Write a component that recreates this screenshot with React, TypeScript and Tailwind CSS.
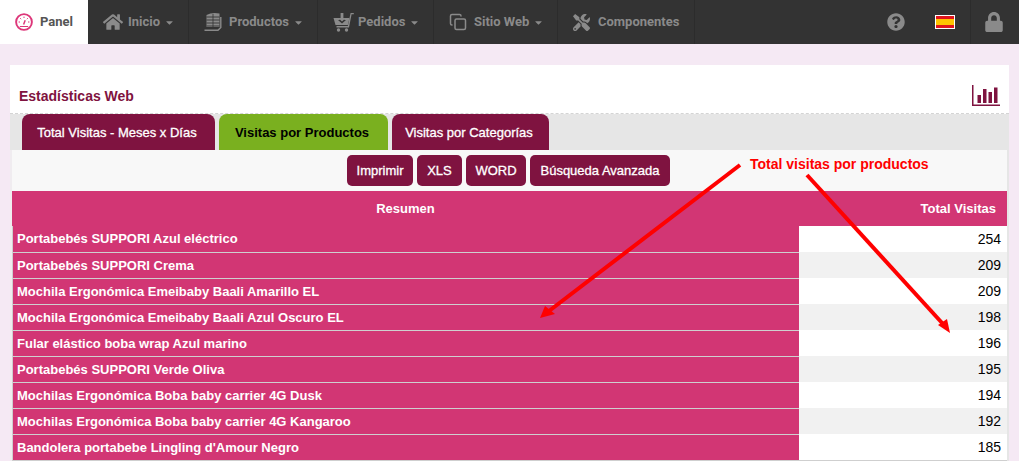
import React from "react";
import { FaHome, FaQuestionCircle, FaLock, FaTools, FaCaretDown } from "react-icons/fa";
import { LuCopy } from "react-icons/lu";

function Gauge() {
  return (
    <svg width="18" height="18" viewBox="0 0 18 18" fill="none" stroke="#dd3679">
      <circle cx="9" cy="9" r="7.9" strokeWidth="1.9" />
      <path
        d="M9 3.6 V5 M5.2 5.2 L6.2 6.2 M12.8 5.2 L11.8 6.2 M3.6 9 H5 M14.4 9 H13"
        strokeWidth="1"
      />
      <path d="M4.8 13.5 H13.2" strokeWidth="1" />
      <path d="M8.6 11.5 L10.2 7.2" strokeWidth="1.5" />
    </svg>
  );
}

function Stack() {
  return (
    <svg width="19" height="20" viewBox="0 0 19 20" fill="none" stroke="#8a8a8a">
      <path d="M2.5 3 Q8 0 15.5 1.5 V15 H2.5 Z" fill="#8a8a8a" stroke="none" />
      <path d="M2.5 5 H15.5 M2.5 8 H15.5 M2.5 11 H15.5 M2.5 14 H15.5" stroke="#333" strokeWidth="0.9" />
      <path d="M9 2 V15" stroke="#333" strokeWidth="0.8" />
      <path d="M16.8 5 V15.5 L14 18.3 H0.5" strokeWidth="1.4" />
    </svg>
  );
}

function Cart() {
  return (
    <svg width="21" height="20" viewBox="0 0 21 20" fill="#8a8a8a">
      <path d="M0.5 6 H6.8 V8 H5 L9 11.5 L13 8 H11.2 V6 H16.5 L14.8 13 H2.5 Z" />
      <path d="M7.6 1 H10.4 V6 H12.8 L9 9.6 L5.2 6 H7.6 Z" />
      <path d="M14.8 14 H3.5 V15.4 H16 L18.6 2.2 H20.8 V1 H17.6 Z" />
      <circle cx="5.5" cy="18" r="1.7" />
      <circle cx="13.5" cy="18" r="1.7" />
    </svg>
  );
}

function ChartIcon() {
  return (
    <svg width="28" height="22" viewBox="0 0 28 22" fill="#7f1340">
      <path d="M0 0 H1.5 V19.5 H28 V21 H0 Z" />
      <rect x="5.5" y="10" width="3.5" height="8" />
      <rect x="11" y="4" width="3.5" height="14" />
      <rect x="16.5" y="7" width="3.5" height="11" />
      <rect x="22" y="2.5" width="3.5" height="15.5" />
    </svg>
  );
}

function NavItem({ icon, label, caret, w }: { icon: React.ReactNode; label: string; caret?: boolean; w: string }) {
  return (
    <div className={`flex h-full items-center border-r border-[#2c2c2c] pl-[15px] ${w}`}>
      <span className="mr-[3px] flex w-[22px] justify-start">{icon}</span>
      <span className="text-[13px] font-bold text-[#8a8a8a]">{label}</span>
      {caret && <FaCaretDown className="ml-[4px] text-[#8a8a8a]" size={11} />}
    </div>
  );
}

const rows: [string, number][] = [
  ["Portabebés SUPPORI Azul eléctrico", 254],
  ["Portabebés SUPPORI Crema", 209],
  ["Mochila Ergonómica Emeibaby Baali Amarillo EL", 209],
  ["Mochila Ergonómica Emeibaby Baali Azul Oscuro EL", 198],
  ["Fular elástico boba wrap Azul marino", 196],
  ["Portabebés SUPPORI Verde Oliva", 195],
  ["Mochilas Ergonómica Boba baby carrier 4G Dusk", 194],
  ["Mochilas Ergonómica Boba baby carrier 4G Kangaroo", 192],
  ["Bandolera portabebe Lingling d'Amour Negro", 185],
];

function Tab({ label, green, w }: { label: string; green?: boolean; w: string }) {
  return (
    <div
      className={`flex h-[36px] items-center justify-center rounded-t-[8px] pt-[2px] pr-[3px] text-[13px] ${w} ${
        green ? "bg-[#7ab01f] font-bold text-black" : "bg-[#7f1340] text-white [-webkit-text-stroke:0.3px_white]"
      }`}
    >
      {label}
    </div>
  );
}

function Btn({ label, w }: { label: string; w: string }) {
  return (
    <div
      className={`flex h-[31px] items-center justify-center rounded-[5px] bg-[#7f1340] text-[13px] text-white [-webkit-text-stroke:0.3px_white] ${w}`}
    >
      {label}
    </div>
  );
}

export default function App() {
  return (
    <div className="relative h-[461px] w-[1019px] overflow-hidden bg-[#f5e9f4] font-['Liberation_Sans',sans-serif]">
      <header className="flex h-[44px] items-center bg-[#333333] font-['Roboto',sans-serif]">
        <div className="flex h-full w-[88px] items-center bg-white pl-[15px]">
          <Gauge />
          <span className="ml-[7px] text-[13px] font-bold text-[#555555]">Panel</span>
        </div>
        <NavItem w="w-[101px]" icon={<FaHome size={20} color="#8a8a8a" />} label="Inicio" caret />
        <NavItem w="w-[129px]" icon={<Stack />} label="Productos" caret />
        <NavItem w="w-[116px]" icon={<Cart />} label="Pedidos" caret />
        <NavItem w="w-[124px]" icon={<LuCopy size={18} color="#8a8a8a" />} label="Sitio Web" caret />
        <NavItem w="w-[137px]" icon={<FaTools size={17} color="#8a8a8a" />} label="Componentes" />
        <div className="flex-1" />
        <div className="flex h-full w-[112px] items-center border-r border-[#2c2c2c]">
          <FaQuestionCircle size={18} color="#8a8a8a" className="ml-[28px]" />
          <div className="ml-[30px] flex h-[14px] w-[20px] flex-col border border-white">
            <span className="h-[3px] bg-[#e0141c]" />
            <span className="flex-1 bg-[#ffc400]" />
            <span className="h-[3px] bg-[#e0141c]" />
          </div>
        </div>
        <div className="flex w-[48px] justify-center pr-[2px]">
          <FaLock size={20} color="#8a8a8a" />
        </div>
      </header>

      <main className="ml-[10px] mt-[21px] w-[999px]">
        <div className="flex h-[49px] items-end justify-between border-b border-dashed border-[#d4d4d4] bg-white px-[9px] pb-[6px]">
          <h1 className="mb-[1px] text-[14px] leading-[20px] font-bold text-[#7f1340]">Estadísticas Web</h1>
          <ChartIcon />
        </div>
        <div className="flex gap-[4px] bg-[#e6e6e6] pl-[12px]">
          <Tab w="w-[193px]" label="Total Visitas - Meses x Días" />
          <Tab w="w-[169px]" green label="Visitas por Productos" />
          <Tab w="w-[157px]" label="Visitas por Categorías" />
        </div>
        <div className="border-r-2 border-l-2 border-r-[#e6e6e6] border-l-[#f0ecf0]">
          <div className="flex h-[41px] items-center justify-center gap-[4px] bg-[#f8f8f8] pr-[2px]">
            <Btn w="w-[66px]" label="Imprimir" />
            <Btn w="w-[45px]" label="XLS" />
            <Btn w="w-[60px]" label="WORD" />
            <Btn w="w-[140px]" label="Búsqueda Avanzada" />
          </div>
          <div className="grid grid-cols-[787px_208px] bg-[#d23674] text-[13px] font-bold text-white">
            <div className="flex h-[35px] items-center justify-center">Resumen</div>
            <div className="flex h-[35px] items-center justify-end pr-[11px]">Total Visitas</div>
          </div>
          <div className="border-b border-[#cfcfcf]">
            {rows.map(([name, value], i) => (
              <div key={name} className="grid h-[26px] grid-cols-[787px_208px]">
                <div
                  className={`flex items-center border-l border-[#cfcfcf] bg-[#d23674] pl-[4px] text-[13px] font-bold text-white ${
                    i > 0 ? "border-t" : ""
                  }`}
                >
                  {name}
                </div>
                <div
                  className={`flex items-center justify-end pr-[6px] text-[14px] text-black ${
                    i % 2 ? "bg-[#f1f1f1]" : "bg-white"
                  }`}
                >
                  {value}
                </div>
              </div>
            ))}
          </div>
        </div>
      </main>

      <span className="absolute left-[750px] top-[154px] text-[14px] font-bold text-[#ff0000]">Total visitas por productos</span>
      <svg className="absolute left-0 top-0" width="1019" height="461" fill="#ff0000" stroke="none">
        <line x1="740" y1="165" x2="549" y2="311" stroke="#ff0000" strokeWidth="4" />
        <path d="M540 318 L545 306 L555 314 Z" />
        <line x1="807" y1="175" x2="943" y2="324" stroke="#ff0000" strokeWidth="4" />
        <path d="M950 333 L938 325 L947 319 Z" />
      </svg>
    </div>
  );
}
